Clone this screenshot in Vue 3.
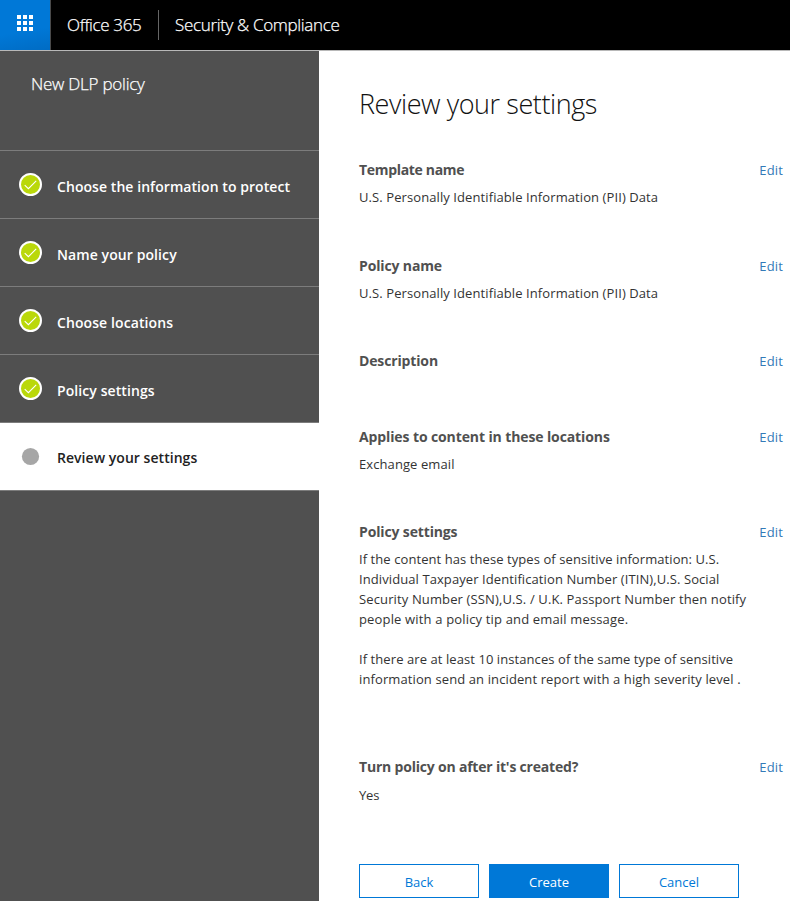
<script setup>
const steps = [
  { label: 'Choose the information to protect', key: 'information', done: true },
  { label: 'Name your policy', key: 'name', done: true },
  { label: 'Choose locations', key: 'locations', done: true },
  { label: 'Policy settings', key: 'settings', done: true },
  { label: 'Review your settings', key: 'review', done: false },
]

const sections = [
  { key: 'template', title: 'Template name', lines: ['U.S. Personally Identifiable Information (PII) Data'] },
  { key: 'name', title: 'Policy name', lines: ['U.S. Personally Identifiable Information (PII) Data'] },
  { key: 'description', title: 'Description', lines: [] },
  { key: 'locations', title: 'Applies to content in these locations', lines: ['Exchange email'] },
  {
    key: 'settings',
    title: 'Policy settings',
    lines: [
      'If the content has these types of sensitive information: U.S.',
      'Individual Taxpayer Identification Number (ITIN),U.S. Social',
      'Security Number (SSN),U.S. / U.K. Passport Number then notify',
      'people with a policy tip and email message.',
      '',
      'If there are at least 10 instances of the same type of sensitive',
      'information send an incident report with a high severity level .',
    ],
  },
  { key: 'turn-on', title: "Turn policy on after it's created?", lines: ['Yes'] },
]
</script>

<template>
  <div class="page">
    <header class="topbar">
      <button class="launcher" aria-label="App launcher">
        <svg width="16" height="16" viewBox="0 0 16 16" shape-rendering="crispEdges">
          <template v-for="r in 3" :key="r">
            <rect v-for="c in 3" :key="c" :x="(c - 1) * 6" :y="(r - 1) * 6" width="4" height="4" fill="#fff" />
          </template>
        </svg>
      </button>
      <span class="brand">Office 365</span>
      <span class="divider"></span>
      <span class="product">Security &amp; Compliance</span>
    </header>

    <div class="body">
      <aside class="sidebar">
        <div class="wizard-title"><span>New DLP policy</span></div>
        <div v-for="s in steps" :key="s.key" class="step" :class="{ current: !s.done }">
          <svg v-if="s.done" class="mark" width="23" height="23" viewBox="0 0 23 23">
            <circle cx="11.5" cy="11.5" r="10.5" fill="#bad80a" stroke="#fff" stroke-width="2" />
            <path d="M5.7 12.1 9.4 15.7 17.2 7.9" fill="none" stroke="#fff" stroke-width="1.1" />
          </svg>
          <svg v-else class="mark" width="23" height="23" viewBox="0 0 23 23">
            <circle cx="11.5" cy="11.5" r="8.6" fill="#a6a6a6" />
          </svg>
          <span class="label" :class="'step-' + s.key">{{ s.label }}</span>
        </div>
      </aside>

      <main class="content">
        <h1><span>Review your settings</span></h1>
        <section v-for="s in sections" :key="s.key" class="setting" :class="'is-' + s.key">
          <div class="text">
            <h2><span>{{ s.title }}</span></h2>
            <p v-for="(l, i) in s.lines" :key="i" :class="'line-' + i"><span>{{ l }}</span></p>
          </div>
          <a class="edit">Edit</a>
        </section>
        <div class="actions">
          <button class="btn">Back</button>
          <button class="btn primary">Create</button>
          <button class="btn">Cancel</button>
        </div>
      </main>
    </div>
  </div>
</template>

<style>
body { margin: 0; overflow: hidden; }
</style>

<style scoped>
.page {
  width: 790px;
  height: 901px;
  display: flex;
  flex-direction: column;
  overflow: hidden;
  background: #fff;
  font-family: "Open Sans", "Noto Sans", sans-serif;
  color: #333;
  white-space: nowrap;
}
button { font-family: inherit; padding: 0; border: 0; }
.topbar {
  height: 50px;
  flex: none;
  display: flex;
  align-items: center;
  background: #000;
  border-bottom: 1px solid #b8b8b8;
  color: #fff;
  font-size: 17px;
  font-weight: 300;
  letter-spacing: -0.36px;
  -webkit-text-stroke: 0.25px #fff;
}
.launcher {
  width: 50px;
  height: 50px;
  border-right: 1px solid #4a4a4a;
  box-sizing: content-box;
  background: linear-gradient(170deg, #0078d7 60%, #006cc4);
  display: flex;
  align-items: center;
  justify-content: center;
}
.launcher svg { margin-bottom: 4px; display: block; }
.brand { margin-left: 16px; width: 91px; padding-bottom: 2px; }
.divider { width: 1px; height: 30px; background: #666; }
.product { margin-left: 16px; padding-bottom: 2px; letter-spacing: -0.33px; }
.body { flex: 1; display: flex; min-height: 0; }
.sidebar { width: 319px; background: #505050; flex: none; }
.wizard-title {
  height: 99px;
  box-sizing: border-box;
  padding: 21px 0 0 31px;
  color: #fff;
  font-size: 17px;
  line-height: 24px;
  font-weight: 300;
  letter-spacing: -0.24px;
  -webkit-text-stroke: 0.25px #fff;
}
.step {
  height: 67px;
  display: flex;
  border-top: 1px solid #7c7c7c;
  padding-left: 19px;
  color: #fff;
}
.mark { margin-top: 22px; flex: none; }
.label { margin: 24px 0 0 15px; font-size: 14px; line-height: 24px; font-weight: 600; letter-spacing: 0.09px; }
.step-information { letter-spacing: 0.06px; }
.current { background: #fff; color: #222; border-bottom: 1px solid #7c7c7c; }
.current .label { margin-top: 23px; letter-spacing: 0.04px; }
.content { flex: 1; padding: 0 7px 0 40px; }
h1 {
  margin: 0;
  padding-top: 34px;
  height: 75px;
  line-height: 38px;
  font-size: 27px;
  font-weight: 300;
  letter-spacing: -0.43px;
  color: #111;
}
.setting { display: flex; justify-content: space-between; height: 95px; }
.is-template { height: 96px; }
.is-description { height: 76px; }
.is-settings { height: 235px; }
.is-turn-on { height: 107px; }
h2 { margin: 0 0 7px; font-size: 14px; line-height: 20px; font-weight: 700; color: #505050; letter-spacing: -0.14px; }
.is-template h2 { letter-spacing: -0.32px; }
.is-locations h2 { letter-spacing: -0.11px; }
.is-turn-on h2 { margin-bottom: 8px; letter-spacing: -0.2px; }
p { margin: 0; height: 20px; font-size: 13px; line-height: 20px; letter-spacing: 0.09px; }
.is-settings .line-0,
.is-settings .line-5 { letter-spacing: 0.075px; }
.is-settings .line-2 { letter-spacing: 0.13px; }
.is-settings .line-3 { letter-spacing: 0.16px; }
.is-settings .line-6 { letter-spacing: 0.11px; }
.is-turn-on p { letter-spacing: -0.2px; }
.edit { font-size: 13px; line-height: 20px; color: #337ab7; letter-spacing: 0.15px; }
.actions { display: flex; gap: 10px; }
.btn {
  width: 120px;
  height: 34px;
  border: 1px solid #0078d7;
  background: #fff;
  color: #0078d7;
  font-size: 13px;
  padding-top: 2px;
}
.primary { background: #0078d7; color: #fff; }
</style>
